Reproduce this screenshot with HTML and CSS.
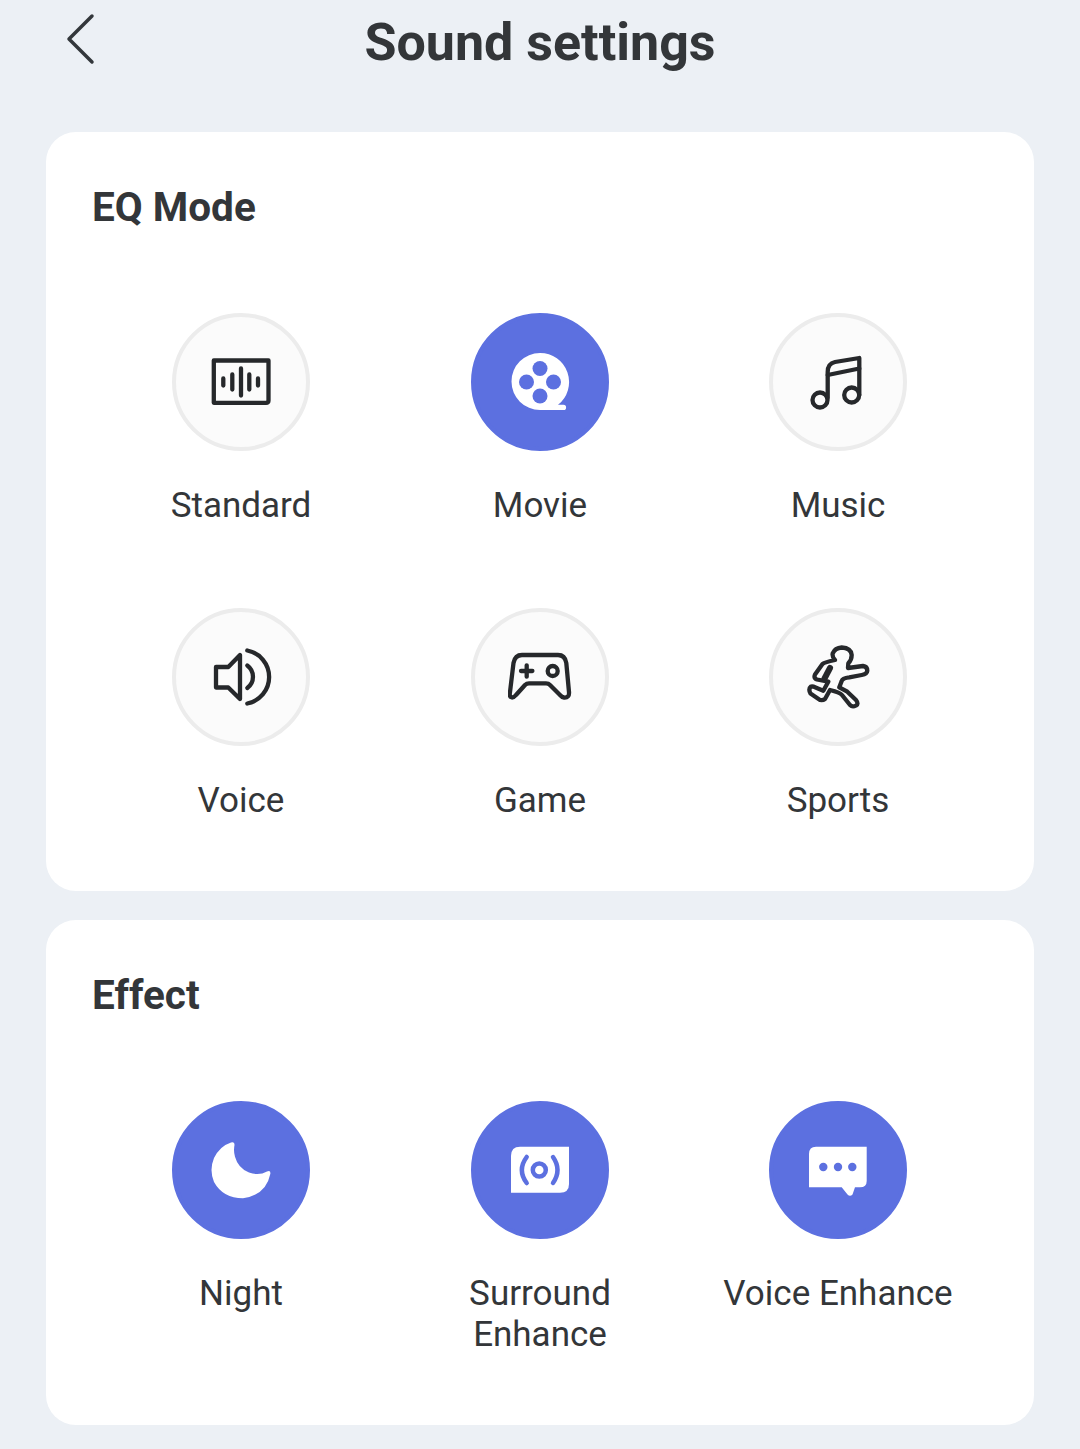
FILE: index.html
```html
<!DOCTYPE html>
<html>
	<head>
		<meta charset="UTF-8">
		<title>Sound settings</title>
		<link rel="stylesheet" href="styles.css">
	</head>
	<body>
		<div class="topbar">
			<div class="back">
				<svg width="40" height="60" viewBox="0 0 40 60"><path class="chevron" d="M28 3 L5 26 L28 49"/></svg>
			</div>
			<div class="title">Sound settings</div>
			<div></div>
		</div>

		<div class="card eq">
			<div class="header">EQ Mode</div>
			<div class="modes">
				<div class="mode">
					<div class="circle">
						<svg width="64" height="64" viewBox="0 0 64 64">
							<path class="line" d="M4.800 10.500 H59.500 V50.500 Q59.500 52.800 57 52.800 H4.800 Z"/>
							<path class="line" d="M14.300 28.500 V35.500 M23.300 24.500 V39.500 M32 18.500 V45.500 M40.300 24.500 V39.500 M49 28.500 V35.500"/>
						</svg>
					</div>
					<div class="label">Standard</div>
				</div>
				<div class="mode active">
					<div class="circle">
						<svg width="64" height="64" viewBox="0 0 64 64">
							<path class="white" d="M32 3 A29 29 0 0 1 50 54.800 H55.500 A2.600 2.600 0 0 1 55.500 60 H32 A28.500 28.500 0 0 1 32 3 Z"/>
							<circle class="hole" cx="32" cy="18.500" r="7.500"/>
							<circle class="hole" cx="18.500" cy="32" r="7.500"/>
							<circle class="hole" cx="45.500" cy="32" r="7.500"/>
							<circle class="hole" cx="32" cy="46" r="7.500"/>
						</svg>
					</div>
					<div class="label">Movie</div>
				</div>
				<div class="mode">
					<div class="circle">
						<svg width="64" height="64" viewBox="0 0 64 64">
							<circle class="line" cx="14" cy="50" r="7.500"/>
							<circle class="line" cx="45.700" cy="45" r="7.500"/>
							<path class="line" d="M21.700 48 V22 Q21.700 13.500 29 12 L53.300 8 V45"/>
							<path class="line" d="M21.700 25 L53.300 18.500"/>
						</svg>
					</div>
					<div class="label">Music</div>
				</div>
				<div class="mode">
					<div class="circle">
						<svg width="64" height="64" viewBox="0 0 64 64">
							<path class="line" d="M7 22 H19.300 L31 10 V54 L19.300 42.500 H7 Z"/>
							<path class="line" d="M38.300 5.500 A27 27 0 0 1 38.300 58.500"/>
							<path class="line" d="M38.300 20.500 A14 14 0 0 1 38.300 43"/>
						</svg>
					</div>
					<div class="label">Voice</div>
				</div>
				<div class="mode">
					<div class="circle">
						<svg width="64" height="64" viewBox="0 0 64 64">
							<path class="line" d="M14 10 H50 Q57 10 58.300 18 L61 47 Q61.500 53 56 52.500 Q54 52.300 52 50 L42 40 Q40.500 38.300 38 38.300 H21 Q18.700 38.300 17 40 L8 50 Q6 52.500 4 52.500 Q1 52 2 47 L5.500 18 Q7 10 14 10 Z"/>
							<path class="line" d="M13 26 H24.400 M18.700 20.300 V31.700"/>
							<circle class="line" cx="44.700" cy="26" r="5"/>
						</svg>
					</div>
					<div class="label">Game</div>
				</div>
				<div class="mode">
					<div class="circle">
						<svg width="64" height="64" viewBox="0 0 64 64">
							<path class="line" d="M35.700 2.500 Q45 3 45.700 10 Q45.700 15 42.300 18.300 L42 23 L57 21 Q61.300 21.500 61.300 25.700 Q61 29 55.700 30 L43.300 32.300 Q36.500 33 35.700 36 L33.300 42.300 L41.300 46.700 L50 55 Q53 59 50 60.500 Q46.500 62.500 44 60 L36 50 Q34 47.500 24 45 L19 54 Q17 55.500 14 55 L4.500 48.500 Q2 44 5 41.500 Q7 41 9 42.300 L17.300 45.700 L22.300 36.700 L11 34.500 Q7.500 33 9 29.500 L16.500 19 Q18 17.500 29 15 Q26 12 26.700 8.300 Q29 3 35.700 2.500 Z"/>
							<path class="wedge" d="M24 23 L18.500 33.500"/>
						</svg>
					</div>
					<div class="label">Sports</div>
				</div>
			</div>
		</div>

		<div class="card effect">
			<div class="header">Effect</div>
			<div class="modes">
				<div class="mode active">
					<div class="circle">
						<svg width="64" height="64" viewBox="0 0 64 64">
							<path class="white" d="M22 4.500 Q25.500 3.300 25.500 7 Q24.300 13 26 18.700 Q29 30 40 34.500 Q50 38 58 33.500 Q62 32 61.300 36 Q57 57 34 60.300 Q14 60.300 5 44 Q0 32 5 20 Q11 8 22 4.500 Z"/>
						</svg>
					</div>
					<div class="label">Night</div>
				</div>
				<div class="mode active">
					<div class="circle">
						<svg width="64" height="64" viewBox="0 0 64 64">
							<path class="white" d="M12 8.700 H61 V46 Q61 54.700 52 54.700 H3 V18 Q3 8.700 12 8.700 Z"/>
							<circle class="blueline" cx="31.300" cy="32" r="6.500"/>
							<path class="blueline" d="M18.700 19 Q9 32 18.700 45 M45 19 Q54 32 45 45"/>
						</svg>
					</div>
					<div class="label">Surround<br>Enhance</div>
				</div>
				<div class="mode active">
					<div class="circle">
						<svg width="64" height="64" viewBox="0 0 64 64">
							<path class="white" d="M10 8.700 H60.700 V43 Q60.700 49.300 54 49.300 H49 L46.500 56.500 Q44 59 41.500 56.500 L35.700 49.300 H3 V16 Q3 8.700 10 8.700 Z"/>
							<circle class="hole" cx="17.300" cy="29" r="4.200"/>
							<circle class="hole" cx="32" cy="29" r="4.200"/>
							<circle class="hole" cx="46.300" cy="29" r="4.200"/>
						</svg>
					</div>
					<div class="label">Voice Enhance</div>
				</div>
			</div>
		</div>
	</body>
</html>
```

FILE: styles.css
```css
body {
	margin: 0;
	height: 1449px;
	overflow: hidden;
	background-color: #ecf0f5;
	font-family: "Roboto", sans-serif;
	color: #333639;
}
.topbar {
	display: grid;
	grid-template-columns: 1fr auto 1fr;
	height: 132px;
	padding: 0 46px;
	box-sizing: border-box;
}
.back {
	padding-top: 13px;
	padding-left: 18px;
}
.chevron {
	fill: none;
	stroke: #33373b;
	stroke-width: 3.500;
	stroke-linecap: round;
	stroke-linejoin: round;
}
.line {
	fill: none;
	stroke: #26282b;
	stroke-width: 4.300;
	stroke-linecap: round;
	stroke-linejoin: round;
}
.wedge {
	fill: none;
	stroke: #26282b;
	stroke-width: 6;
	stroke-linecap: round;
}
.white {
	fill: #ffffff;
}
.hole {
	fill: #5c70e0;
}
.blueline {
	fill: none;
	stroke: #5c70e0;
	stroke-width: 4.500;
	stroke-linecap: round;
}
.title {
	font-size: 52px;
	font-weight: 700;
	line-height: 85px;
}
.card {
	margin: 0 46px;
	background-color: #ffffff;
	border-radius: 30px;
	padding: 0 46px;
	box-sizing: border-box;
}
.eq {
	height: 759px;
	margin-bottom: 29px;
}
.effect {
	height: 505px;
}
.header {
	font-size: 40.500px;
	font-weight: 700;
	line-height: 46px;
	padding-top: 52px;
	height: 181px;
	box-sizing: border-box;
}
.modes {
	display: grid;
	grid-template-columns: 298px 300px 296px;
	grid-auto-rows: 295px;
}
.mode {
	display: flex;
	flex-direction: column;
	align-items: center;
}
.circle {
	width: 138px;
	height: 138px;
	box-sizing: border-box;
	border: 4px solid #ececec;
	border-radius: 50%;
	background-color: #fbfbfb;
	display: flex;
	align-items: center;
	justify-content: center;
}
.active .circle {
	background-color: #5c70e0;
	border-color: #5c70e0;
}
.label {
	margin-top: 34px;
	font-size: 35px;
	line-height: 41px;
	text-align: center;
}
```
